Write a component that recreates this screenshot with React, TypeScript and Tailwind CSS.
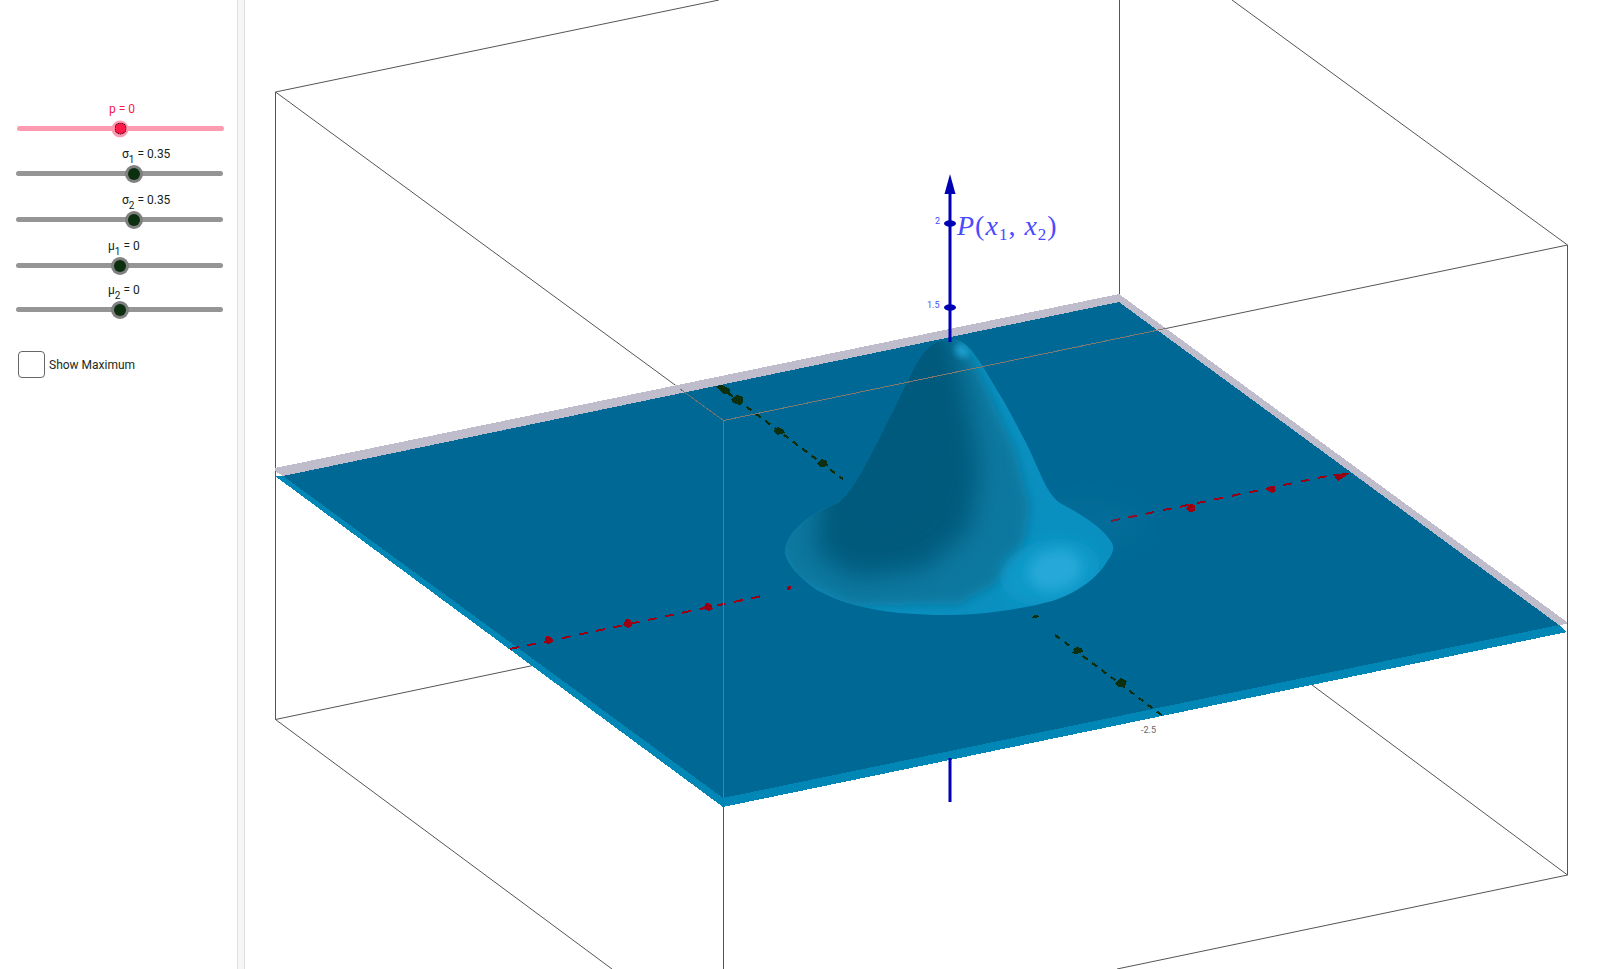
import React from 'react';

interface SliderProps {
  name: string;
  sub?: string;
  value: string;
  position: number;
  rowClass: string;
  labelClass: string;
  trackClass: string;
  haloClass: string;
  dotClass: string;
  textClass: string;
}

const dark = {
  trackClass: 'bg-[#959595]',
  haloClass: 'w-[18px] h-[18px] bg-[#808080]',
  dotClass: 'w-3 h-3 bg-[#0c2f10]',
  textClass: 'text-[#10241a]',
};

const sliders: SliderProps[] = [
  {
    name: 'p', value: '0', position: 103, rowClass: 'ml-px', labelClass: 'ml-[92px]',
    trackClass: 'bg-[#ff9bb0]',
    haloClass: 'w-[17px] h-[17px] bg-[#ff9bb0]',
    dotClass: 'w-3 h-3 bg-[#ff1a4a] border border-dotted border-black',
    textClass: 'text-[#ff1744]',
  },
  { name: 'σ', sub: '1', value: '0.35', position: 118, rowClass: 'mt-[15px]', labelClass: 'ml-[106px]', ...dark },
  { name: 'σ', sub: '2', value: '0.35', position: 118, rowClass: 'mt-4', labelClass: 'ml-[106px]', ...dark },
  { name: 'μ', sub: '1', value: '0', position: 104, rowClass: 'mt-4', labelClass: 'ml-[92px]', ...dark },
  { name: 'μ', sub: '2', value: '0', position: 104, rowClass: 'mt-[14px]', labelClass: 'ml-[92px]', ...dark },
];

function Slider({ name, sub, value, position, rowClass, labelClass, trackClass, haloClass, dotClass, textClass }: SliderProps) {
  return (
    <div className={rowClass}>
      <div className={`h-4 text-xs leading-4 whitespace-nowrap ${labelClass} ${textClass}`}>
        {name}
        {sub && <sub className="text-[10px] bottom-[-5px]">{sub}</sub>} = {value}
      </div>
      <div className={`relative mt-[9px] w-[207px] h-[5px] rounded-full ${trackClass}`}>
        <div
          className={`absolute top-1/2 -translate-x-1/2 -translate-y-1/2 rounded-full flex items-center justify-center ${haloClass}`}
          style={{ left: position }}
        >
          <div className={`rounded-full ${dotClass}`} />
        </div>
      </div>
    </div>
  );
}

function Surface() {
  return (
    <svg className="w-full h-full block" viewBox="245 0 1355 969" fill="none">
      <defs>
        <filter id="wide" x="-40%" y="-40%" width="180%" height="180%">
          <feGaussianBlur stdDeviation="13" />
        </filter>
        <filter id="mid" x="-30%" y="-30%" width="160%" height="160%">
          <feGaussianBlur stdDeviation="6" />
        </filter>
        <filter id="softer" x="-30%" y="-30%" width="160%" height="160%">
          <feGaussianBlur stdDeviation="3" />
        </filter>
        <clipPath id="outline">
          <path d="M950 340C936 340 928 346 920 358C910 374 900 398 890 417C880 437 870 458 857 480C850 491 845 498 838 503C825 508 810 515 800 525C790 534 785 543 785 552C787 563 795 574 817 590C840 603 870 610 900 613C925 615 950 616 975 614C1000 612 1030 607 1052 601C1080 592 1100 575 1108 560C1114 552 1115 546 1110 540C1102 528 1083 515 1060 503C1052 497 1048 490 1043 480C1035 462 1030 450 1023 437C1015 422 1010 412 1003 400C995 387 990 378 983 367C976 356 970 347 962 342C958 340 954 340 950 340Z" />
        </clipPath>
      </defs>

      {/* box edges behind the plane */}
      <g stroke="#555555" strokeWidth="1">
        <path d="M275.5 92L719 0" />
        <path d="M275.5 92V719.5" />
        <path d="M275.5 719.5L612 969" />
        <path d="M275.5 719.5L540 664" />
        <path d="M275.5 92L723.5 420.5" />
        <path d="M723.5 420.5L1567.5 245" />
        <path d="M1567.5 245L1232 0" />
        <path d="M1119.5 0V300" />
        <path d="M1567.5 245V875" />
        <path d="M1567.5 875L1117 969" />
        <path d="M1567.5 875L1300 676" />
        <path d="M723.5 420V969" />
      </g>

      {/* plane */}
      <g shapeRendering="crispEdges">
        <path d="M275 468L1119 294L1567 622V624L1559 625L1119 302L283 476L275 471Z" fill="#bfbdcb" />
        <path d="M275 476H283L723 798L1559 625L1567 632L723 807Z" fill="#0087b5" />
        <path d="M283 476L1119 302L1559 625L723 798Z" fill="#006894" />
      </g>

      {/* lower blue axis */}
      <rect x="948.5" y="758" width="3" height="44" fill="#0000b4" />

      {/* red axis */}
      <g stroke="#9a0012" strokeWidth="2" shapeRendering="crispEdges">
        <path d="M510 649L762 596" strokeDasharray="9 8.6" />
        <path d="M1111 521L1332 475" strokeDasharray="9 8.6" />
      </g>
      <g fill="#9a0012" shapeRendering="crispEdges">
        <path d="M544 643L546 636L551 637L553 642L549 644Z" />
        <path d="M623 625L626 619L631 620L632 626L628 628Z" />
        <path d="M703 609L706 603L711 604L713 609L709 611Z" />
        <path d="M1186 509L1190 504L1195 505L1195 511L1190 512Z" />
        <path d="M1267 490L1270 486L1274 487L1276 491L1272 493Z" />
        <ellipse cx="789" cy="588" rx="2" ry="2" />
        <path d="M1333 474L1350 473L1338 481Z" />
      </g>

      {/* dark green axis */}
      <g stroke="#0c2f10" strokeWidth="2.2" shapeRendering="crispEdges">
        <path d="M728 393L843 479" strokeDasharray="6 5.6" />
        <path d="M1055 635L1163 716" strokeDasharray="6 5.6" />
      </g>
      <g fill="#0c2f10" shapeRendering="crispEdges">
        <path d="M716 386L722 385L730 389L730 394L724 394L720 391Z" />
        <path d="M731 399L737 395L743 397L743 403L740 405L733 403Z" />
        <path d="M773 431L778 427L784 430L785 433L777 435Z" />
        <path d="M817 463L822 459L827 461L828 466L820 467Z" />
        <path d="M1031 618L1035 615L1040 616L1036 618Z" />
        <path d="M1072 653L1076 647L1082 648L1083 652L1076 654Z" />
        <path d="M1115 683L1121 678L1127 681L1125 687L1118 687Z" />
      </g>

      {/* halo round the bump */}
      <ellipse cx="1085" cy="525" rx="65" ry="28" fill="#0a78a4" opacity="0.25" filter="url(#wide)" />

      {/* bump */}
      <g clipPath="url(#outline)">
        <rect x="780" y="335" width="340" height="285" fill="#0a90c0" />
        <path d="M958 335L985 385L1015 450L1030 505L1020 570L960 604L850 606L795 580L768 535L830 490L900 335Z" fill="#07789f" filter="url(#mid)" />
        <path d="M950 325L968 400L980 470L970 530L925 568L855 578L815 552L820 490L870 420L895 325Z" fill="#005a7d" filter="url(#wide)" />
        <path d="M895 330H935L945 400L948 470L930 520L880 545L842 528L835 495L875 420Z" fill="#005a7d" filter="url(#mid)" />
        <ellipse cx="1050" cy="572" rx="50" ry="32" fill="#0d99c9" transform="rotate(-12 1050 572)" filter="url(#mid)" />
        <ellipse cx="1055" cy="570" rx="27" ry="20" fill="#27a9d8" transform="rotate(-15 1055 570)" filter="url(#mid)" />
        <ellipse cx="962" cy="351" rx="8" ry="6" fill="#1f9fcf" transform="rotate(40 962 351)" filter="url(#softer)" />
      </g>

      {/* box edges drawn across the plane */}
      <g strokeWidth="1" shapeRendering="crispEdges">
        <path d="M723.5 420.5L1168 328" stroke="#85796f" />
        <path d="M680 389L723.5 420.5" stroke="#6f7478" />
        <path d="M723.5 420.5V798" stroke="#66757e" />
      </g>

      {/* upper blue axis */}
      <rect x="948.5" y="190" width="3" height="152" fill="#0000b4" />
      <path d="M950 174L955.5 194H944.5Z" fill="#0000b4" />
      <ellipse cx="950" cy="223.5" rx="6" ry="3.2" fill="#0000b4" />
      <ellipse cx="950" cy="307.5" rx="6" ry="3.2" fill="#0000b4" />

      <g fontFamily="Roboto, sans-serif" fontSize="9">
        <text x="935" y="224" fill="#4a4aff">2</text>
        <text x="927" y="308" fill="#4a4aff">1.5</text>
        <text x="1141" y="733" fill="#666666">-2.5</text>
      </g>

      <text x="957" y="235" fontFamily="'Liberation Serif', serif" fontSize="28" letterSpacing="1" fill="#4a4aff">
        <tspan fontStyle="italic">P</tspan>
        <tspan>(</tspan>
        <tspan fontStyle="italic">x</tspan>
        <tspan fontSize="17" dy="5">1</tspan>
        <tspan dy="-5">, </tspan>
        <tspan fontStyle="italic">x</tspan>
        <tspan fontSize="17" dy="5">2</tspan>
        <tspan dy="-5">)</tspan>
      </text>
    </svg>
  );
}

export default function App() {
  return (
    <div className="flex w-[1600px] h-[969px] overflow-hidden bg-white font-['Roboto',sans-serif]">
      <div className="w-[237px] shrink-0 pt-[101px] pl-4">
        {sliders.map((s) => (
          <Slider key={s.name + (s.sub ?? '')} {...s} />
        ))}
        <div className="flex items-center gap-1 mt-[39px] ml-[2px]">
          <div className="w-[27px] h-[27px] rounded bg-white border border-[#666666]" />
          <span className="text-xs text-[#1b2b20]">Show Maximum</span>
        </div>
      </div>
      <div className="w-2 shrink-0 bg-[#f6f6f6] border-x border-[#dedede]" />
      <div className="flex-1 min-w-0">
        <Surface />
      </div>
    </div>
  );
}
